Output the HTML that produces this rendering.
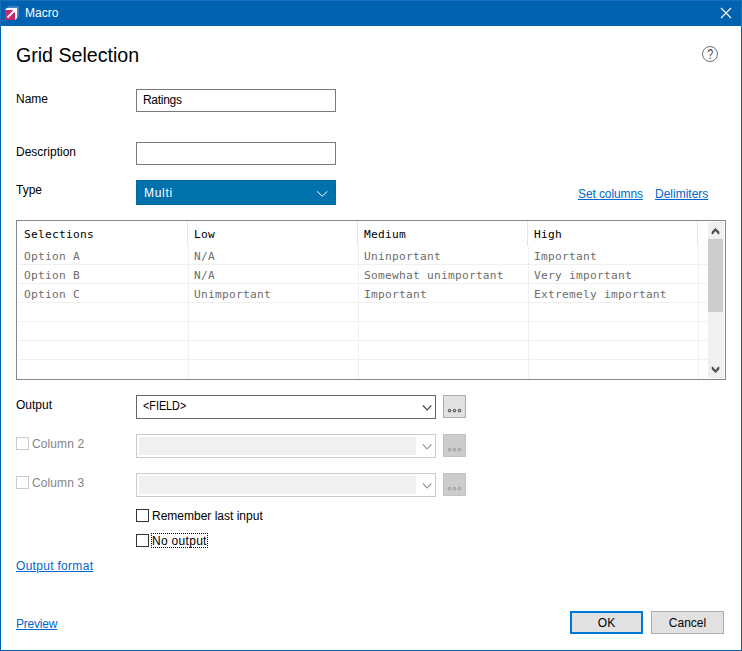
<!DOCTYPE html>
<html><head><meta charset="utf-8"><title>Macro</title>
<style>
html,body{margin:0;padding:0;}
body{width:742px;height:651px;position:relative;overflow:hidden;background:#fff;font-family:"Liberation Sans",sans-serif;font-size:12px;color:#000;}
.abs{position:absolute;}
#win{position:absolute;left:0;top:0;width:740px;height:624px;border:1px solid #0063b1;border-top:26px solid #0063b1;background:#fff;}
#tb{position:absolute;left:0;top:0;width:742px;height:26px;background:#0063b1;}
#tbt{position:absolute;left:0;top:0;width:742px;height:1px;background:#1a70b8;}
.t{position:absolute;white-space:nowrap;line-height:14px;height:14px;}
.lnk{color:#0066cc;text-decoration:underline;}
.inp{position:absolute;box-sizing:border-box;border:1px solid #7a7a7a;background:#fff;}
.mono{font-family:"DejaVu Sans Mono","Liberation Mono",monospace;font-size:11.2px;letter-spacing:0.257px;}
.cb{position:absolute;box-sizing:border-box;width:13px;height:13px;border:1px solid #333;background:#fff;}
.btn{position:absolute;box-sizing:border-box;background:#e1e1e1;border:1px solid #adadad;}
</style></head><body>
<div id="win"></div>
<div id="tb"></div><div id="tbt"></div><div class="abs" style="left:0;top:0;width:1px;height:26px;background:#1a70b8;"></div><div class="abs" style="left:741px;top:0;width:1px;height:26px;background:#1a70b8;"></div>
<svg class="abs" style="left:4px;top:5px" width="16" height="16" viewBox="0 0 16 16">
<path d="M3 3L5 1H15V11L13 13H3Z" fill="#3f83c3"/>
<path d="M1 5L3 3H13V13L11 15H1Z" fill="#fff"/>
<rect x="1" y="5" width="10" height="10" fill="#c9286e"/>
<path d="M3.5 12.5L9.5 6.5" stroke="#fff" stroke-width="1.8" fill="none"/>
<path d="M11 5L8 5L11 8Z" fill="#fff"/>
</svg>
<div class="t" style="left:25px;top:6px;color:#fff;">Macro</div>
<svg class="abs" style="left:720px;top:7px" width="12" height="12" viewBox="0 0 12 12"><path d="M1 1L11 11M11 1L1 11" stroke="#fff" stroke-width="1.1" fill="none"/></svg>

<div class="t" style="left:16px;top:43px;font-size:19.6px;line-height:24px;height:24px;">Grid Selection</div>
<svg class="abs" style="left:701px;top:45px" width="18" height="18" viewBox="0 0 18 18"><circle cx="9" cy="9" r="7.5" fill="none" stroke="#6e6e6e" stroke-width="1"/><text transform="translate(9.4 13.7) scale(0.78 1.08)" x="0" y="0" text-anchor="middle" font-family="Liberation Sans, sans-serif" font-size="13" fill="#444">?</text></svg>

<div class="t" style="left:16px;top:92px;">Name</div>
<div class="inp" style="left:136px;top:89px;width:200px;height:23px;"><div class="t" style="left:6px;top:3px;letter-spacing:-0.3px;">Ratings</div></div>
<div class="t" style="left:16px;top:145px;">Description</div>
<div class="inp" style="left:136px;top:142px;width:200px;height:23px;"></div>
<div class="t" style="left:16px;top:183px;">Type</div>
<div class="abs" style="left:136px;top:180px;width:200px;height:25px;background:#0071ab;box-sizing:border-box;border:1px solid #0069a1;"><div class="t" style="left:7px;top:5px;color:#fff;letter-spacing:0.7px;">Multi</div>
<svg class="abs" style="left:179px;top:9px" width="14" height="8" viewBox="0 0 14 8"><path d="M1 1.3L6.2 6.2L11.4 1.3" fill="none" stroke="#fff" stroke-width="1"/></svg></div>
<div class="t lnk" style="left:578px;top:187px;letter-spacing:-0.1px;">Set columns</div>
<div class="t lnk" style="left:655px;top:187px;">Delimiters</div>

<!-- grid -->
<div id="grid" class="abs mono" style="left:16px;top:220px;width:710px;height:160px;box-sizing:border-box;border:1px solid #828790;background:#fff;overflow:hidden;">
<div class="abs" style="left:1px;top:43px;width:689px;height:1px;background:#f0f0f0;"></div>
<div class="abs" style="left:1px;top:62px;width:689px;height:1px;background:#f0f0f0;"></div>
<div class="abs" style="left:1px;top:81px;width:689px;height:1px;background:#f0f0f0;"></div>
<div class="abs" style="left:1px;top:100px;width:689px;height:1px;background:#f0f0f0;"></div>
<div class="abs" style="left:1px;top:119px;width:689px;height:1px;background:#f0f0f0;"></div>
<div class="abs" style="left:1px;top:138px;width:689px;height:1px;background:#f0f0f0;"></div>
<div class="abs" style="left:170px;top:0;width:1px;height:25px;background:#e5e5e5;"></div>
<div class="abs" style="left:171px;top:25px;width:1px;height:133px;background:#f0f0f0;"></div>
<div class="abs" style="left:340px;top:0;width:1px;height:25px;background:#e5e5e5;"></div>
<div class="abs" style="left:341px;top:25px;width:1px;height:133px;background:#f0f0f0;"></div>
<div class="abs" style="left:510px;top:0;width:1px;height:25px;background:#e5e5e5;"></div>
<div class="abs" style="left:511px;top:25px;width:1px;height:133px;background:#f0f0f0;"></div>
<div class="abs" style="left:680px;top:0;width:1px;height:25px;background:#e5e5e5;"></div>
<div class="abs" style="left:681px;top:25px;width:1px;height:133px;background:#f0f0f0;"></div>
<div class="t" style="left:7px;top:7px;color:#000;">Selections</div>
<div class="t" style="left:177px;top:7px;color:#000;">Low</div>
<div class="t" style="left:347px;top:7px;color:#000;">Medium</div>
<div class="t" style="left:517px;top:7px;color:#000;">High</div>
<div class="t" style="left:7px;top:29px;color:#6d6d6d;">Option A</div>
<div class="t" style="left:177px;top:29px;color:#6d6d6d;">N/A</div>
<div class="t" style="left:347px;top:29px;color:#6d6d6d;">Uninportant</div>
<div class="t" style="left:517px;top:29px;color:#6d6d6d;">Important</div>
<div class="t" style="left:7px;top:48px;color:#6d6d6d;">Option B</div>
<div class="t" style="left:177px;top:48px;color:#6d6d6d;">N/A</div>
<div class="t" style="left:347px;top:48px;color:#6d6d6d;">Somewhat unimportant</div>
<div class="t" style="left:517px;top:48px;color:#6d6d6d;">Very important</div>
<div class="t" style="left:7px;top:67px;color:#6d6d6d;">Option C</div>
<div class="t" style="left:177px;top:67px;color:#6d6d6d;">Unimportant</div>
<div class="t" style="left:347px;top:67px;color:#6d6d6d;">Important</div>
<div class="t" style="left:517px;top:67px;color:#6d6d6d;">Extremely important</div>
<div class="abs" style="left:691px;top:1px;width:16px;height:156px;background:#f0f0f0;"></div>
<div class="abs" style="left:691px;top:18px;width:15px;height:73px;background:#cdcdcd;"></div>
<svg class="abs" style="left:691px;top:2px" width="16" height="16" viewBox="0 0 16 16"><path d="M7.5 4.9L11.3 8.7V11.2H10.2L7.5 8L4.8 11.2H3.7V8.7Z" fill="#4d4d4d"/></svg>
<svg class="abs" style="left:691px;top:141px" width="16" height="16" viewBox="0 0 16 16"><path d="M7.5 11.1L11.3 7.3V4.8H10.2L7.5 8L4.8 4.8H3.7V7.3Z" fill="#4d4d4d"/></svg>
</div>

<div class="t" style="left:16px;top:398px;">Output</div>
<div class="inp" style="left:136px;top:395px;width:300px;height:24px;border-color:#666;"><div class="t" style="left:6px;top:3px;transform:scaleX(0.9);transform-origin:0 0;">&lt;FIELD&gt;</div>
<svg class="abs" style="left:284px;top:8px" width="14" height="8" viewBox="0 0 14 8"><path d="M1.9 1.5L6.1 5.9L10.3 1.5" fill="none" stroke="#444" stroke-width="1.1"/></svg></div>
<div class="btn" style="left:443px;top:395px;width:23px;height:23px;"><svg class="abs" style="left:3px;top:12px" width="16" height="6" viewBox="0 0 16 6"><g fill="none" stroke="#1a1a1a" stroke-width="0.9"><circle cx="2.5" cy="2.6" r="1.25"/><circle cx="7.45" cy="2.6" r="1.25"/><circle cx="12.5" cy="2.6" r="1.25"/></g></svg></div>

<div class="cb" style="left:16px;top:437px;border-color:#ccc;"></div>
<div class="t" style="left:32px;top:437px;color:#838383;letter-spacing:0.1px;">Column 2</div>
<div class="cb" style="left:16px;top:476px;border-color:#ccc;"></div>
<div class="t" style="left:32px;top:476px;color:#838383;letter-spacing:0.1px;">Column 3</div>

<div class="inp" style="left:136px;top:434px;width:300px;height:24px;border-color:#cbcbcb;"><div class="abs" style="left:2px;top:2px;width:277px;height:18px;background:#f0f0f0;"></div>
<svg class="abs" style="left:284px;top:8px" width="14" height="8" viewBox="0 0 14 8"><path d="M1.9 1.5L6.1 5.9L10.3 1.5" fill="none" stroke="#9a9a9a" stroke-width="1.1"/></svg></div>
<div class="btn" style="left:443px;top:434px;width:23px;height:23px;background:#ccc;border-color:#c2c2c2;"><svg class="abs" style="left:3px;top:12px" width="16" height="6" viewBox="0 0 16 6"><g fill="none" stroke="#8a8a8a" stroke-width="0.9"><circle cx="2.5" cy="2.6" r="1.25"/><circle cx="7.45" cy="2.6" r="1.25"/><circle cx="12.5" cy="2.6" r="1.25"/></g></svg></div>
<div class="inp" style="left:136px;top:473px;width:300px;height:24px;border-color:#cbcbcb;"><div class="abs" style="left:2px;top:2px;width:277px;height:18px;background:#f0f0f0;"></div>
<svg class="abs" style="left:284px;top:8px" width="14" height="8" viewBox="0 0 14 8"><path d="M1.9 1.5L6.1 5.9L10.3 1.5" fill="none" stroke="#9a9a9a" stroke-width="1.1"/></svg></div>
<div class="btn" style="left:443px;top:473px;width:23px;height:23px;background:#ccc;border-color:#c2c2c2;"><svg class="abs" style="left:3px;top:12px" width="16" height="6" viewBox="0 0 16 6"><g fill="none" stroke="#8a8a8a" stroke-width="0.9"><circle cx="2.5" cy="2.6" r="1.25"/><circle cx="7.45" cy="2.6" r="1.25"/><circle cx="12.5" cy="2.6" r="1.25"/></g></svg></div>
<div class="cb" style="left:136px;top:509px;"></div>
<div class="t" style="left:152px;top:509px;">Remember last input</div>
<div class="cb" style="left:136px;top:534px;"></div>
<div class="t" style="left:152px;top:534px;letter-spacing:0.3px;">No output</div>
<div class="abs" style="left:151px;top:533px;width:55px;height:13px;border:1px dotted #000;"></div>

<div class="t lnk" style="left:16px;top:559px;letter-spacing:0.3px;">Output format</div>
<div class="t lnk" style="left:16px;top:617px;letter-spacing:-0.2px;">Preview</div>

<div class="btn" style="left:570px;top:611px;width:73px;height:23px;border:2px solid #0078d7;"><div class="t" style="left:0;width:69px;text-align:center;top:3px;">OK</div></div>
<div class="btn" style="left:651px;top:611px;width:73px;height:23px;"><div class="t" style="left:0;width:71px;text-align:center;top:4px;">Cancel</div></div>
</body></html>
